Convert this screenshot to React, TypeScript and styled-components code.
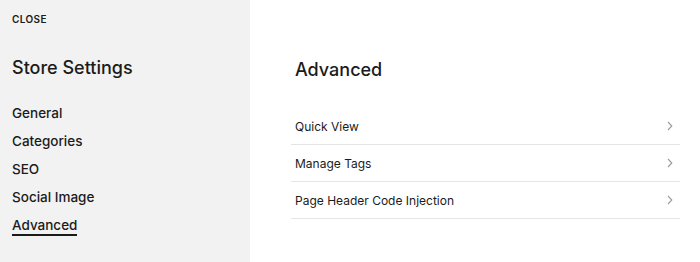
import React from 'react'
import styled, { createGlobalStyle } from 'styled-components'

const GlobalStyle = createGlobalStyle`
  html, body {
    margin: 0;
    padding: 0;
    height: 100%;
  }
  body {
    font-family: Inter, 'Liberation Sans', sans-serif;
    color: #1b1b1b;
    background: #fff;
    -webkit-font-smoothing: antialiased;
  }
`

const navItems = ['General', 'Categories', 'SEO', 'Social Image', 'Advanced']
const rows = ['Quick View', 'Manage Tags', 'Page Header Code Injection']

const Chevron = () => (
  <svg width="8" height="10" viewBox="0 0 8 10" fill="none">
    <path d="M2 1 L5.8 5 L2 9" stroke="#9a9a9a" strokeWidth="1.1" />
  </svg>
)

const App: React.FC = () => {
  const active = 'Advanced'
  return (
    <>
      <GlobalStyle />
      <SLayout>
        <SSidebar>
          <SClose>CLOSE</SClose>
          <STitle>Store Settings</STitle>
          <SNav>
            {navItems.map(item => (
              <SNavItem key={item} $active={item === active}>
                {item}
              </SNavItem>
            ))}
          </SNav>
        </SSidebar>
        <SMain>
          <SHeading>Advanced</SHeading>
          <SList>
            {rows.map(row => (
              <SRow key={row}>
                <span>{row}</span>
                <Chevron />
              </SRow>
            ))}
          </SList>
        </SMain>
      </SLayout>
    </>
  )
}

const SLayout = styled.div`
  display: flex;
  width: 100%;
  height: 262px;
`

const SSidebar = styled.aside`
  flex: 0 0 250px;
  background-color: #f2f2f2;
  padding: 13px 0 0 12px;
  box-sizing: border-box;
`

const SClose = styled.div`
  font-size: 10px;
  line-height: 12px;
  font-weight: 600;
  letter-spacing: 0.04em;
`

const STitle = styled.h2`
  margin: 32px 0 0;
  font-size: 18px;
  line-height: 22px;
  font-weight: 500;
`

const SNav = styled.ul`
  list-style: none;
  margin: 25px 0 0;
  padding: 0;
  display: flex;
  flex-direction: column;
  gap: 10px;
`

const SNavItem = styled.li<{ $active: boolean }>`
  align-self: flex-start;
  font-size: 13.5px;
  line-height: 18px;
  font-weight: 500;
  border-bottom: 2px solid ${p => (p.$active ? '#1b1b1b' : 'transparent')};
  margin-bottom: -2px;
`

const SMain = styled.main`
  flex: 1;
  padding: 59px 20px 0 41px;
  box-sizing: border-box;
`

const SHeading = styled.h1`
  margin: 0 0 0 4px;
  font-size: 18px;
  line-height: 22px;
  font-weight: 500;
`

const SList = styled.div`
  margin-top: 27px;
`

const SRow = styled.div`
  display: flex;
  align-items: center;
  justify-content: space-between;
  height: 37px;
  padding: 0 6px 0 4px;
  box-sizing: border-box;
  border-bottom: 1px solid #e4e4e4;
  font-size: 12px;
  font-weight: 400;
  color: #1b1b1b;
`

export default App
